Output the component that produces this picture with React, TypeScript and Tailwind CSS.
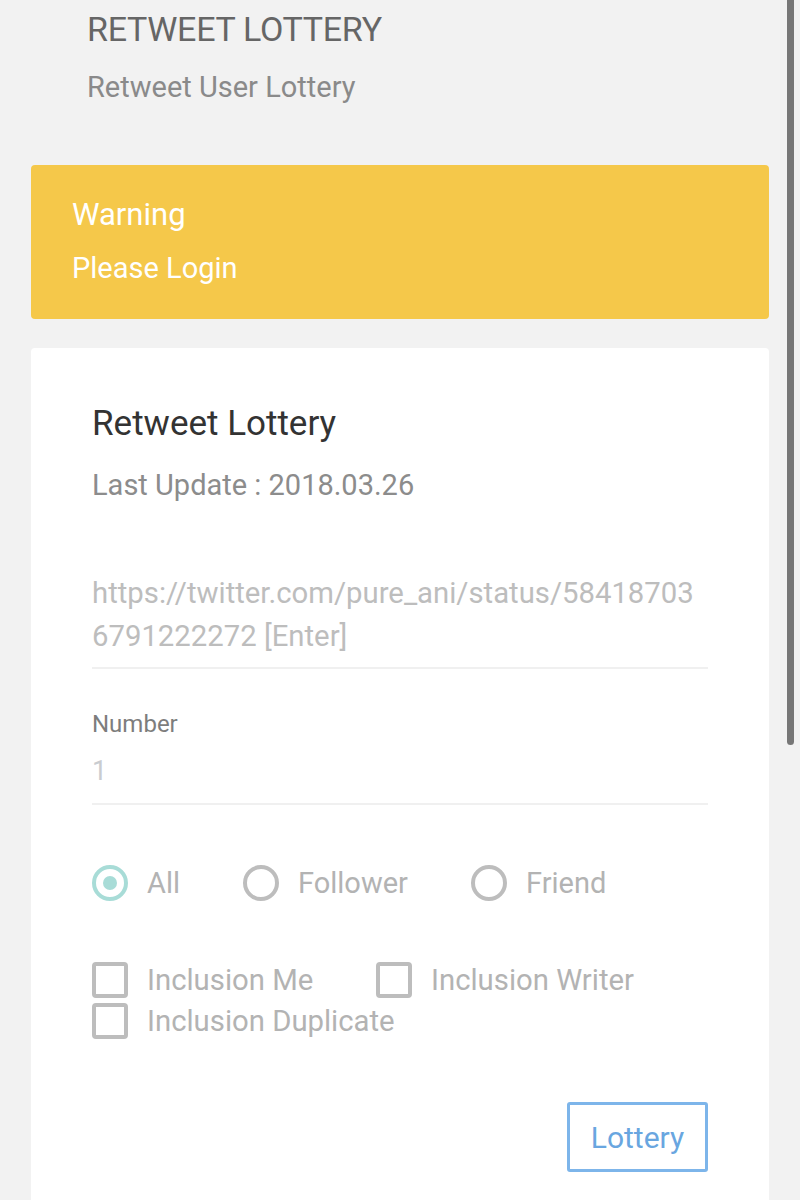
import React from "react";

function Radio({ checked, label }: { checked?: boolean; label: string }) {
  return (
    <div className="flex items-center">
      <span
        className={
          checked
            ? "flex h-[36px] w-[36px] items-center justify-center rounded-full border-[4px] border-[#a8dcd7]"
            : "flex h-[36px] w-[36px] items-center justify-center rounded-full border-[4px] border-[#bdbdbd]"
        }
      >
        {checked ? <span className="h-[14px] w-[14px] rounded-full bg-[#a8dcd7]" /> : null}
      </span>
      <span className="ml-[19px] text-[29px] leading-[36px] text-[#b3b3b3]">{label}</span>
    </div>
  );
}

function Check({ label }: { label: string }) {
  return (
    <div className="flex items-center">
      <span className="h-[36px] w-[36px] rounded-[4px] border-[4px] border-[#bdbdbd]" />
      <span className="ml-[19px] text-[29.3px] leading-[36px] text-[#b3b3b3]">{label}</span>
    </div>
  );
}

export default function App() {
  return (
    <div
      className="relative min-h-[1200px] overflow-hidden bg-[#f2f2f2]"
      style={{ fontFamily: "Roboto, 'Noto Sans', sans-serif" }}
    >
      <div className="pl-[87px] pt-[9px]">
        <div className="text-[34px] leading-[40px] tracking-[-0.3px] text-[#666666]">RETWEET LOTTERY</div>
        <div className="mt-[20px] text-[29px] leading-[36px] text-[#8a8a8a]">Retweet User Lottery</div>
      </div>

      <div className="mx-[31px] mt-[60px] h-[154px] rounded-[4px] bg-[#f5c84a] px-[41px] pt-[30px]">
        <div className="text-[31px] leading-[40px] text-white">Warning</div>
        <div className="mt-[13px] text-[29px] leading-[40px] text-white">Please Login</div>
      </div>

      <div className="mx-[31px] mt-[29px] h-[900px] rounded-[4px] bg-white px-[61px] pt-[56px]">
        <div className="text-[35px] leading-[40px] text-[#333333]">Retweet Lottery</div>
        <div className="mt-[23px] text-[29px] leading-[36px] text-[#8c8c8c]">Last Update : 2018.03.26</div>

        <div className="mt-[69px] border-b-[2px] border-[#f0f0f0] pb-[9px] text-[29.3px] leading-[43px] text-[#bdbdbd]">
          <div className="whitespace-nowrap">https://twitter.com/pure_ani/status/58418703</div>
          <div className="whitespace-nowrap">6791222272 [Enter]</div>
        </div>

        <div className="mt-[40px] text-[24px] leading-[30px] text-[#7d7d7d]">Number</div>
        <div className="mt-[14px] border-b-[2px] border-[#f0f0f0] pb-[14px] text-[27px] leading-[36px] text-[#c9ccd0]">1</div>

        <div className="mt-[60px] flex items-center">
          <div className="w-[151px]">
            <Radio checked label="All" />
          </div>
          <div className="w-[228px]">
            <Radio label="Follower" />
          </div>
          <Radio label="Friend" />
        </div>

        <div className="mt-[61px] flex flex-wrap gap-y-[5px]">
          <div className="w-[284px]">
            <Check label="Inclusion Me" />
          </div>
          <Check label="Inclusion Writer" />
          <div className="w-full">
            <Check label="Inclusion Duplicate" />
          </div>
        </div>

        <div className="mt-[63px] flex justify-end">
          <button className="flex h-[70px] w-[141px] items-center justify-center rounded-[3px] border-[3px] border-[#7db5ea] text-[30px] text-[#69a6e0]">
            Lottery
          </button>
        </div>
      </div>

      <div className="absolute right-[6px] top-0 h-[745px] w-[7px] rounded-b-full bg-[#777777]" />
    </div>
  );
}
